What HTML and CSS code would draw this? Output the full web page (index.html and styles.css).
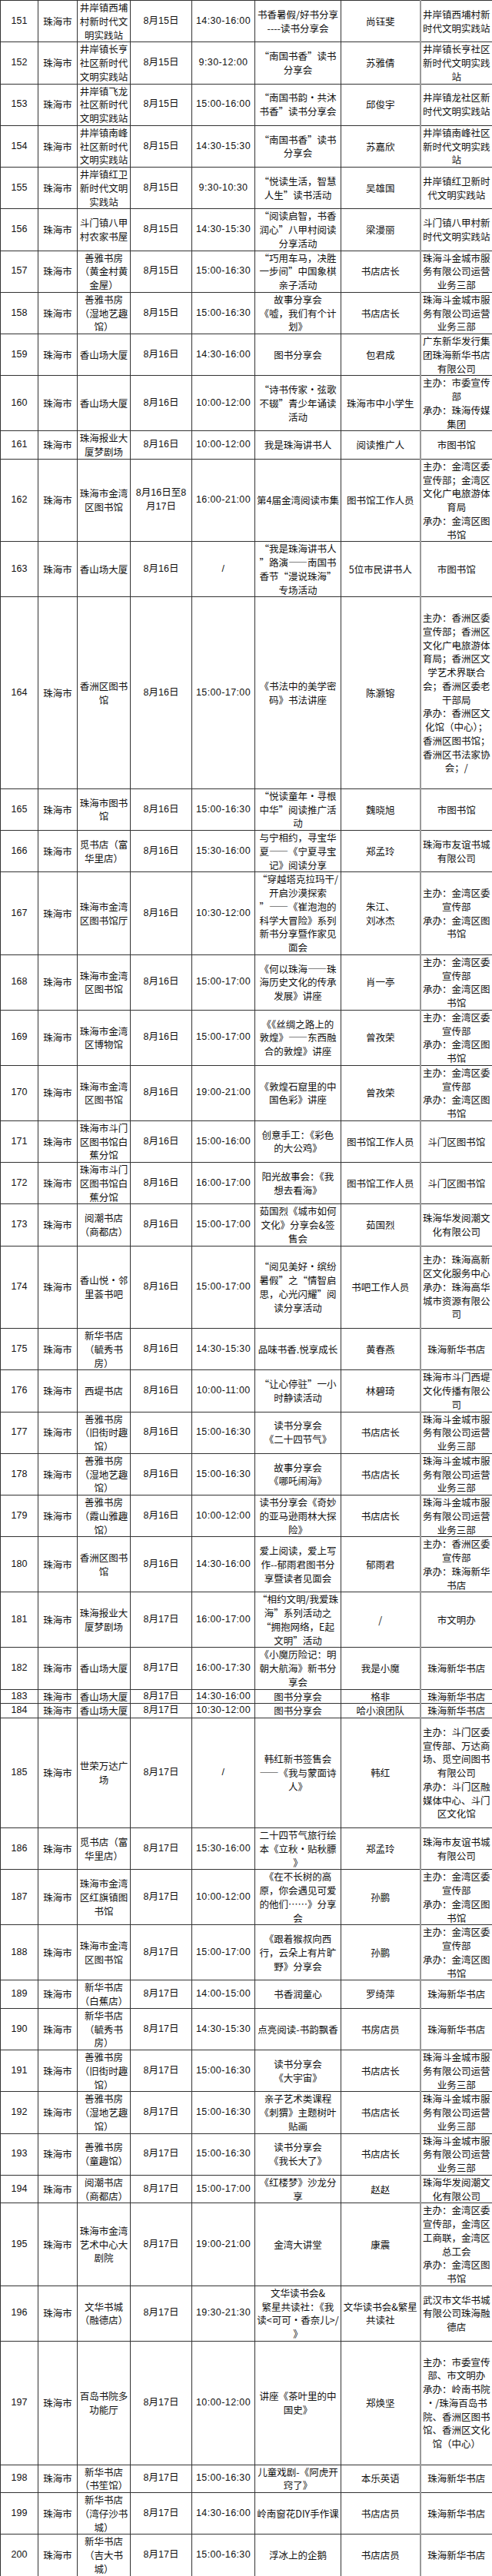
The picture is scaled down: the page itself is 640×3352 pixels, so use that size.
FILE: index.html
```html
<!DOCTYPE html>
<html lang="zh-CN">
<head>
<meta charset="utf-8">
<title>活动安排</title>
<link rel="stylesheet" href="styles.css">
</head>
<body>
<table class="sched">
<colgroup>
<col class="c-no"><col class="c-city"><col class="c-place"><col class="c-date"><col class="c-time"><col class="c-act"><col class="c-spk"><col class="c-org">
</colgroup>
<tbody>
<tr><td class="n">151</td><td>珠海市</td><td>井岸镇西埔<br>村新时代文<br>明实践站</td><td class="n">8月15日</td><td class="n t">14:30-16:00</td><td>书香暑假/好书分享<br>----读书分享会</td><td>尚钰斐</td><td>井岸镇西埔村新<br>时代文明实践站</td></tr>
<tr><td class="n">152</td><td>珠海市</td><td>井岸镇长亨<br>社区新时代<br>文明实践站</td><td class="n">8月15日</td><td class="n t">9:30-12:00</td><td>“南国书香”读书<br>分享会</td><td>苏雅倩</td><td>井岸镇长亨社区<br>新时代文明实践<br>站</td></tr>
<tr><td class="n">153</td><td>珠海市</td><td>井岸镇飞龙<br>社区新时代<br>文明实践站</td><td class="n">8月15日</td><td class="n t">15:00-16:00</td><td>“南国书韵·共沐<br>书香”读书分享会</td><td>邱俊宇</td><td>井岸镇龙社区新<br>时代文明实践站</td></tr>
<tr><td class="n">154</td><td>珠海市</td><td>井岸镇南峰<br>社区新时代<br>文明实践站</td><td class="n">8月15日</td><td class="n t">14:30-15:30</td><td>“南国书香”读书<br>分享会</td><td>苏嘉欣</td><td>井岸镇南峰社区<br>新时代文明实践<br>站</td></tr>
<tr><td class="n">155</td><td>珠海市</td><td>井岸镇红卫<br>新时代文明<br>实践站</td><td class="n">8月15日</td><td class="n t">9:30-10:30</td><td>“悦读生活，智慧<br>人生”读书活动</td><td>吴雄国</td><td>井岸镇红卫新时<br>代文明实践站</td></tr>
<tr><td class="n">156</td><td>珠海市</td><td>斗门镇八甲<br>村农家书屋</td><td class="n">8月15日</td><td class="n t">14:30-15:30</td><td>“阅读启智，书香<br>润心”八甲村阅读<br>分享活动</td><td>梁漫丽</td><td>斗门镇八甲村新<br>时代文明实践站</td></tr>
<tr><td class="n">157</td><td>珠海市</td><td>善雅书房<br>（黄金村黄<br>金屋）</td><td class="n">8月15日</td><td class="n t">15:00-16:30</td><td>“巧用车马，决胜<br>一步间”中国象棋<br>亲子活动</td><td>书店店长</td><td>珠海斗金城市服<br>务有限公司运营<br>业务三部</td></tr>
<tr><td class="n">158</td><td>珠海市</td><td>善雅书房<br>（湿地艺趣<br>馆）</td><td class="n">8月15日</td><td class="n t">15:00-16:30</td><td>故事分享会<br>《嘘，我们有个计<br>划》</td><td>书店店长</td><td>珠海斗金城市服<br>务有限公司运营<br>业务三部</td></tr>
<tr><td class="n">159</td><td>珠海市</td><td>香山场大厦</td><td class="n">8月16日</td><td class="n t">14:30-16:00</td><td>图书分享会</td><td>包君成</td><td>广东新华发行集<br>团珠海新华书店<br>有限公司</td></tr>
<tr><td class="n">160</td><td>珠海市</td><td>香山场大厦</td><td class="n">8月16日</td><td class="n t">10:00-12:00</td><td>“诗书传家·弦歌<br>不辍”青少年诵读<br>活动</td><td>珠海市中小学生</td><td>主办：市委宣传<br>部<br>承办：珠海传媒<br>集团</td></tr>
<tr><td class="n">161</td><td>珠海市</td><td>珠海报业大<br>厦梦剧场</td><td class="n">8月16日</td><td class="n t">10:00-12:00</td><td>我是珠海讲书人</td><td>阅读推广人</td><td>市图书馆</td></tr>
<tr><td class="n">162</td><td>珠海市</td><td>珠海市金湾<br>区图书馆</td><td class="n">8月16日至8<br>月17日</td><td class="n t">16:00-21:00</td><td>第4届金湾阅读市集</td><td>图书馆工作人员</td><td>主办：金湾区委<br>宣传部；金湾区<br>文化广电旅游体<br>育局<br>承办：金湾区图<br>书馆</td></tr>
<tr><td class="n">163</td><td>珠海市</td><td>香山场大厦</td><td class="n">8月16日</td><td class="n t">/</td><td>“我是珠海讲书人<br>”路演——南国书<br>香节“漫说珠海”<br>专场活动</td><td>5位市民讲书人</td><td>市图书馆</td></tr>
<tr class="r14"><td class="n">164</td><td>珠海市</td><td>香洲区图书<br>馆</td><td class="n">8月16日</td><td class="n t">15:00-17:00</td><td>《书法中的美学密<br>码》书法讲座</td><td>陈灏镕</td><td>主办：香洲区委<br>宣传部；香洲区<br>文化广电旅游体<br>育局；香洲区文<br>学艺术界联合<br>会；香洲区委老<br>干部局<br>承办：香洲区文<br>化馆（中心）；<br>香洲区图书馆；<br>香洲区书法家协<br>会；/</td></tr>
<tr><td class="n">165</td><td>珠海市</td><td>珠海市图书<br>馆</td><td class="n">8月16日</td><td class="n t">15:00-16:30</td><td>“悦读童年·寻根<br>中华”阅读推广活<br>动</td><td>魏晓旭</td><td>市图书馆</td></tr>
<tr><td class="n">166</td><td>珠海市</td><td>觅书店（富<br>华里店）</td><td class="n">8月16日</td><td class="n t">15:30-16:00</td><td>与宁相约，寻宝华<br>夏——《宁夏寻宝<br>记》阅读分享</td><td>郑孟玲</td><td>珠海市友谊书城<br>有限公司</td></tr>
<tr><td class="n">167</td><td>珠海市</td><td>珠海市金湾<br>区图书馆厅</td><td class="n">8月16日</td><td class="n t">10:30-12:00</td><td>“穿越塔克拉玛干/<br>开启沙漠探索<br>”——《崔泡泡的<br>科学大冒险》系列<br>新书分享暨作家见<br>面会</td><td>朱江、<br>刘冰杰</td><td>主办：金湾区委<br>宣传部<br>承办：金湾区图<br>书馆</td></tr>
<tr><td class="n">168</td><td>珠海市</td><td>珠海市金湾<br>区图书馆</td><td class="n">8月16日</td><td class="n t">15:00-17:00</td><td>《何以珠海——珠<br>海历史文化的传承<br>发展》讲座</td><td>肖一亭</td><td>主办：金湾区委<br>宣传部<br>承办：金湾区图<br>书馆</td></tr>
<tr><td class="n">169</td><td>珠海市</td><td>珠海市金湾<br>区博物馆</td><td class="n">8月16日</td><td class="n t">15:00-17:00</td><td>《《丝绸之路上的<br>敦煌》——东西融<br>合的敦煌》讲座</td><td>曾孜荣</td><td>主办：金湾区委<br>宣传部<br>承办：金湾区图<br>书馆</td></tr>
<tr><td class="n">170</td><td>珠海市</td><td>珠海市金湾<br>区图书馆</td><td class="n">8月16日</td><td class="n t">19:00-21:00</td><td>《敦煌石窟里的中<br>国色彩》讲座</td><td>曾孜荣</td><td>主办：金湾区委<br>宣传部<br>承办：金湾区图<br>书馆</td></tr>
<tr><td class="n">171</td><td>珠海市</td><td>珠海市斗门<br>区图书馆白<br>蕉分馆</td><td class="n">8月16日</td><td class="n t">15:00-16:00</td><td>创意手工：《彩色<br>的大公鸡》</td><td>图书馆工作人员</td><td>斗门区图书馆</td></tr>
<tr><td class="n">172</td><td>珠海市</td><td>珠海市斗门<br>区图书馆白<br>蕉分馆</td><td class="n">8月16日</td><td class="n t">16:00-17:00</td><td>阳光故事会：《我<br>想去看海》</td><td>图书馆工作人员</td><td>斗门区图书馆</td></tr>
<tr><td class="n">173</td><td>珠海市</td><td>阅潮书店<br>（商都店）</td><td class="n">8月16日</td><td class="n t">15:00-17:00</td><td>茹国烈《城市如何<br>文化》分享会&amp;签<br>售会</td><td>茹国烈</td><td>珠海华发阅潮文<br>化有限公司</td></tr>
<tr class="r6"><td class="n">174</td><td>珠海市</td><td>香山悦·邻<br>里荟书吧</td><td class="n">8月16日</td><td class="n t">15:00-17:00</td><td>“阅见美好·缤纷<br>暑假”之“情智启<br>思，心光闪耀”阅<br>读分享活动</td><td>书吧工作人员</td><td>主办：珠海高新<br>区文化服务中心<br>承办：珠海高华<br>城市资源有限公<br>司</td></tr>
<tr><td class="n">175</td><td>珠海市</td><td>新华书店<br>（毓秀书<br>房）</td><td class="n">8月16日</td><td class="n t">14:30-15:30</td><td>品味书香.悦享成长</td><td>黄春燕</td><td>珠海新华书店</td></tr>
<tr><td class="n">176</td><td>珠海市</td><td>西堤书店</td><td class="n">8月16日</td><td class="n t">10:00-11:00</td><td>“让心停驻”一小<br>时静读活动</td><td>林碧琦</td><td>珠海市斗门西堤<br>文化传播有限公<br>司</td></tr>
<tr><td class="n">177</td><td>珠海市</td><td>善雅书房<br>（旧街时趣<br>馆）</td><td class="n">8月16日</td><td class="n t">15:00-16:30</td><td>读书分享会<br>《二十四节气》</td><td>书店店长</td><td>珠海斗金城市服<br>务有限公司运营<br>业务三部</td></tr>
<tr><td class="n">178</td><td>珠海市</td><td>善雅书房<br>（湿地艺趣<br>馆）</td><td class="n">8月16日</td><td class="n t">15:00-16:30</td><td>故事分享会<br>《哪吒闹海》</td><td>书店店长</td><td>珠海斗金城市服<br>务有限公司运营<br>业务三部</td></tr>
<tr><td class="n">179</td><td>珠海市</td><td>善雅书房<br>（霞山雅趣<br>馆）</td><td class="n">8月16日</td><td class="n t">10:00-12:00</td><td>读书分享会《奇妙<br>的亚马逊雨林大探<br>险》</td><td>书店店长</td><td>珠海斗金城市服<br>务有限公司运营<br>业务三部</td></tr>
<tr><td class="n">180</td><td>珠海市</td><td>香洲区图书<br>馆</td><td class="n">8月16日</td><td class="n t">14:30-16:00</td><td>爱上阅读，爱上写<br>作--郁雨君图书分<br>享暨读者见面会</td><td>郁雨君</td><td>主办：香洲区委<br>宣传部<br>承办：珠海新华<br>书店</td></tr>
<tr><td class="n">181</td><td>珠海市</td><td>珠海报业大<br>厦梦剧场</td><td class="n">8月17日</td><td class="n t">16:00-17:00</td><td>“相约文明/我爱珠<br>海”系列活动之<br>“拥抱网络，E起<br>文明”活动</td><td>/</td><td>市文明办</td></tr>
<tr><td class="n">182</td><td>珠海市</td><td>香山场大厦</td><td class="n">8月17日</td><td class="n t">16:00-17:30</td><td>《小魔历险记：明<br>朝大航海》新书分<br>享会</td><td>我是小魔</td><td>珠海新华书店</td></tr>
<tr><td class="n">183</td><td>珠海市</td><td>香山场大厦</td><td class="n">8月17日</td><td class="n t">14:30-16:00</td><td>图书分享会</td><td>格非</td><td>珠海新华书店</td></tr>
<tr><td class="n">184</td><td>珠海市</td><td>香山场大厦</td><td class="n">8月17日</td><td class="n t">10:30-12:00</td><td>图书分享会</td><td>哈小浪团队</td><td>珠海新华书店</td></tr>
<tr class="r8"><td class="n">185</td><td>珠海市</td><td>世荣万达广<br>场</td><td class="n">8月17日</td><td class="n t">/</td><td>韩红新书签售会<br>——《我与蒙面诗<br>人》</td><td>韩红</td><td>主办：斗门区委<br>宣传部、万达商<br>场、觅空间图书<br>有限公司<br>承办：斗门区融<br>媒体中心、斗门<br>区文化馆</td></tr>
<tr><td class="n">186</td><td>珠海市</td><td>觅书店（富<br>华里店）</td><td class="n">8月17日</td><td class="n t">15:30-16:00</td><td>二十四节气旅行绘<br>本《立秋·贴秋膘<br>》</td><td>郑孟玲</td><td>珠海市友谊书城<br>有限公司</td></tr>
<tr><td class="n">187</td><td>珠海市</td><td>珠海市金湾<br>区红旗镇图<br>书馆</td><td class="n">8月17日</td><td class="n t">10:00-12:00</td><td>《在不长树的高<br>原，你会遇见可爱<br>的他们……》分享<br>会</td><td>孙鹏</td><td>主办：金湾区委<br>宣传部<br>承办：金湾区图<br>书馆</td></tr>
<tr><td class="n">188</td><td>珠海市</td><td>珠海市金湾<br>区图书馆</td><td class="n">8月17日</td><td class="n t">15:00-17:00</td><td>《跟着猴叔向西<br>行，云朵上有片旷<br>野》分享会</td><td>孙鹏</td><td>主办：金湾区委<br>宣传部<br>承办：金湾区图<br>书馆</td></tr>
<tr><td class="n">189</td><td>珠海市</td><td>新华书店<br>（白蕉店）</td><td class="n">8月17日</td><td class="n t">14:00-15:00</td><td>书香润童心</td><td>罗绮萍</td><td>珠海新华书店</td></tr>
<tr><td class="n">190</td><td>珠海市</td><td>新华书店<br>（毓秀书<br>房）</td><td class="n">8月17日</td><td class="n t">14:30-15:30</td><td>点亮阅读-书韵飘香</td><td>书房店员</td><td>珠海新华书店</td></tr>
<tr><td class="n">191</td><td>珠海市</td><td>善雅书房<br>（旧街时趣<br>馆）</td><td class="n">8月17日</td><td class="n t">15:00-16:30</td><td>读书分享会<br>《大宇宙》</td><td>书店店长</td><td>珠海斗金城市服<br>务有限公司运营<br>业务三部</td></tr>
<tr><td class="n">192</td><td>珠海市</td><td>善雅书房<br>（湿地艺趣<br>馆）</td><td class="n">8月17日</td><td class="n t">15:00-16:30</td><td>亲子艺术类课程<br>《刺猬》主题树叶<br>贴画</td><td>书店店长</td><td>珠海斗金城市服<br>务有限公司运营<br>业务三部</td></tr>
<tr><td class="n">193</td><td>珠海市</td><td>善雅书房<br>（童趣馆）</td><td class="n">8月17日</td><td class="n t">15:00-16:30</td><td>读书分享会<br>《我长大了》</td><td>书店店长</td><td>珠海斗金城市服<br>务有限公司运营<br>业务三部</td></tr>
<tr><td class="n">194</td><td>珠海市</td><td>阅潮书店<br>（商都店）</td><td class="n">8月17日</td><td class="n t">15:00-17:00</td><td>《红楼梦》沙龙分<br>享</td><td>赵赵</td><td>珠海华发阅潮文<br>化有限公司</td></tr>
<tr><td class="n">195</td><td>珠海市</td><td>珠海市金湾<br>艺术中心大<br>剧院</td><td class="n">8月17日</td><td class="n t">19:00-21:00</td><td>金湾大讲堂</td><td>康震</td><td>主办：金湾区委<br>宣传部，金湾区<br>工商联，金湾区<br>总工会<br>承办：金湾区图<br>书馆</td></tr>
<tr><td class="n">196</td><td>珠海市</td><td>文华书城<br>（融德店）</td><td class="n">8月17日</td><td class="n t">19:30-21:30</td><td>文华读书会&amp;<br>繁星共读社：《我<br>读&lt;可可·香奈儿&gt;/<br>》</td><td>文华读书会&amp;繁星<br>共读社</td><td>武汉市文华书城<br>有限公司珠海融<br>德店</td></tr>
<tr class="r9"><td class="n">197</td><td>珠海市</td><td>百岛书院多<br>功能厅</td><td class="n">8月17日</td><td class="n t">10:00-12:00</td><td>讲座《茶叶里的中<br>国史》</td><td>郑焕坚</td><td>主办：市委宣传<br>部、市文明办<br>承办：岭南书院<br>·/珠海百岛书<br>院、香洲区图书<br>馆、香洲区文化<br>馆（中心）</td></tr>
<tr><td class="n">198</td><td>珠海市</td><td>新华书店<br>（书笙馆）</td><td class="n">8月17日</td><td class="n t">15:00-16:30</td><td>儿童戏剧-《阿虎开<br>窍了》</td><td>本乐英语</td><td>珠海新华书店</td></tr>
<tr><td class="n">199</td><td>珠海市</td><td>新华书店<br>（湾仔沙书<br>城）</td><td class="n">8月17日</td><td class="n t">14:30-16:00</td><td>岭南窗花DIY手作课</td><td>书店店员</td><td>珠海新华书店</td></tr>
<tr><td class="n">200</td><td>珠海市</td><td>新华书店<br>（吉大书<br>城）</td><td class="n">8月17日</td><td class="n t">15:00-16:30</td><td>浮冰上的企鹅</td><td>书店店员</td><td>珠海新华书店</td></tr>
</tbody>
</table>
</body>
</html>
```

FILE: styles.css
```css
html, body {
  margin: 0;
  padding: 0;
  background: #ffffff;
}

.sched {
  width: 640px;
  table-layout: fixed;
  border-collapse: collapse;
  font-family: "Noto Sans CJK SC", "Noto Sans", sans-serif;
  font-size: 12.5px;
  line-height: 17.75px;
  color: #111111;
}

.c-no { width: 49px; }
.c-city { width: 51px; }
.c-place { width: 69px; }
.c-date { width: 80px; }
.c-time { width: 82px; }
.c-act { width: 112px; }
.c-spk { width: 103px; }
.c-org { width: 94px; }

.sched td {
  border: 1px solid #333333;
  padding: 0;
  text-align: center;
  vertical-align: middle;
  white-space: nowrap;
  overflow: visible;
}

.sched td:nth-child(8) {
  border-left: 2px solid #9a9a9a;
}

.sched td.n {
  font-family: "Liberation Sans", "Noto Sans CJK SC", sans-serif;
  font-size: 12.5px;
}

.sched td.t {
  letter-spacing: 0.4px;
}

.sched tr.r6 { height: 107.5px; }
.sched tr.r8 { height: 143px; }
.sched tr.r9 { height: 160.75px; }
.sched tr.r14 { height: 249.5px; }
```
